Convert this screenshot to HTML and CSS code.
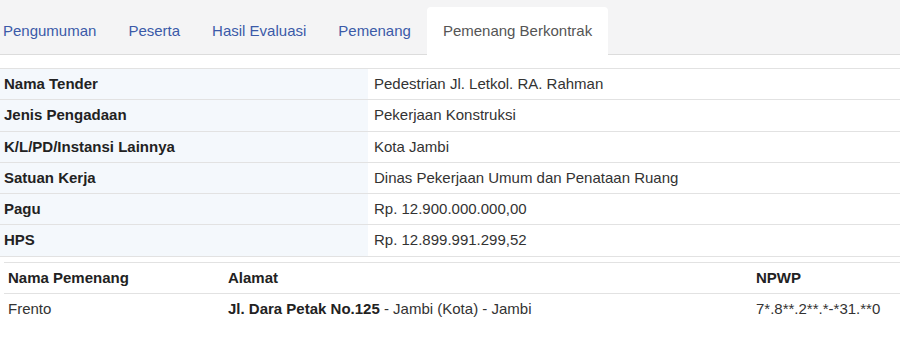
FILE: index.html
```html
<!DOCTYPE html>
<html>
<head>
<meta charset="utf-8">
<link rel="stylesheet" href="styles.css">
</head>
<body>
<div class="page">
  <nav class="tabs">
    <ul class="tab-list">
      <li class="tab"><a href="#">Pengumuman</a></li>
      <li class="tab"><a href="#">Peserta</a></li>
      <li class="tab"><a href="#">Hasil Evaluasi</a></li>
      <li class="tab"><a href="#">Pemenang</a></li>
      <li class="tab active"><a href="#">Pemenang Berkontrak</a></li>
    </ul>
  </nav>
  <div class="content">
    <table class="info">
      <tr><th>Nama Tender</th><td>Pedestrian Jl. Letkol. RA. Rahman</td></tr>
      <tr><th>Jenis Pengadaan</th><td>Pekerjaan Konstruksi</td></tr>
      <tr><th>K/L/PD/Instansi Lainnya</th><td>Kota Jambi</td></tr>
      <tr><th>Satuan Kerja</th><td>Dinas Pekerjaan Umum dan Penataan Ruang</td></tr>
      <tr><th>Pagu</th><td>Rp. 12.900.000.000,00</td></tr>
      <tr><th>HPS</th><td>Rp. 12.899.991.299,52</td></tr>
    </table>
    <table class="winners">
      <thead>
        <tr><th class="c-name">Nama Pemenang</th><th class="c-addr">Alamat</th><th class="c-npwp">NPWP</th></tr>
      </thead>
      <tbody>
        <tr><td>Frento</td><td><b>Jl. Dara Petak No.125</b> - Jambi (Kota) - Jambi</td><td>7*.8**.2**.*-*31.**0</td></tr>
      </tbody>
    </table>
  </div>
</div>
</body>
</html>
```
FILE: styles.css
```css
html, body {
  margin: 0;
  padding: 0;
  background: #fff;
}
body {
  font-family: "Liberation Sans", Arial, sans-serif;
  font-size: 15px;
  color: #333;
  overflow: hidden;
}
.tabs {
  background: #f4f4f5;
  border-bottom: 1px solid #dcdcdc;
  height: 54px;
}
.tab-list {
  list-style: none;
  margin: 0 0 0 -13px;
  padding: 7px 0 0 0;
  display: flex;
  height: 47px;
}
.tab a {
  display: block;
  padding: 0 16px;
  height: 48px;
  line-height: 48px;
  font-size: 15px;
  color: #3b5aa8;
  text-decoration: none;
  border-radius: 4px 4px 0 0;
}
.tab.active a {
  background: #fff;
  color: #555;
}
.content {
  padding-top: 13px;
}
table {
  border-collapse: collapse;
  width: 100%;
}
.info {
  border-bottom: 1px solid #e2e2e2;
}
.info th, .info td {
  text-align: left;
  border-top: 1px solid #e2e2e2;
  padding: 5px;
  line-height: 20.3px;
  vertical-align: middle;
}
.info th {
  width: 359px;
  background: #f4f8fc;
  color: #222;
  font-weight: bold;
  padding-left: 4px;
}
.info td {
  padding-left: 6px;
}
.winners {
  margin: 5px 0 0 4px;
  width: calc(100% - 4px);
}
.winners th, .winners td {
  text-align: left;
  padding: 5px 4px;
  line-height: 20.3px;
}
.winners th {
  color: #222;
  font-weight: bold;
  border-top: 1px solid #e2e2e2;
  border-bottom: 1px solid #e2e2e2;
}
.winners td b {
  color: #222;
}
.c-name { width: 212px; }
.c-addr { width: 520px; }
```
